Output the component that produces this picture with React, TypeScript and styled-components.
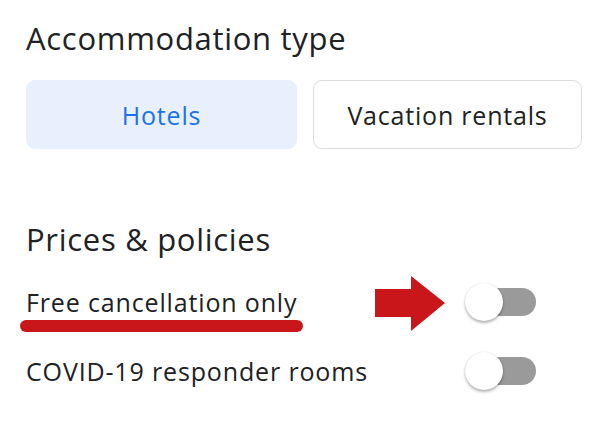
import styled, { createGlobalStyle } from "styled-components";

const GlobalStyle = createGlobalStyle`
  body {
    margin: 0;
    background: #ffffff;
    font-family: "Open Sans", "Liberation Sans", sans-serif;
    color: #202124;
  }
`;

const StyledPage = styled.div`
  width: 600px;
  height: 435px;
  box-sizing: border-box;
  padding: 18px 18px 0 26px;
  position: relative;
  overflow: hidden;
`;
const StyledHeading = styled.h2<{ top?: number }>`
  margin: ${props => props.top || 0}px 0 0 0;
  font-size: 31px;
  font-weight: 400;
  letter-spacing: 0.7px;
  line-height: 40px;
  color: #202124;
`;
const StyledChoiceRow = styled.div`
  display: grid;
  grid-template-columns: 271px 269px;
  gap: 16px;
  margin-top: 22px;
`;
const StyledChoice = styled.div<{ selected?: boolean }>`
  height: 69px;
  box-sizing: border-box;
  border-radius: 9px;
  display: flex;
  align-items: center;
  justify-content: center;
  font-size: 25px;
  letter-spacing: 0.8px;
  color: ${props => props.selected ? '#1a73e8' : '#202124'};
  background-color: ${props => props.selected ? '#e8f0fe' : 'white'};
  border: 1px solid ${props => props.selected ? '#e8f0fe' : '#dadce0'};
`;
const StyledOptions = styled.div`
  margin-top: 8px;
`;
const StyledOption = styled.div`
  height: 69px;
  display: flex;
  align-items: center;
  justify-content: space-between;
  padding-right: 46px;
`;
const StyledLabel = styled.span<{ marked?: boolean }>`
  position: relative;
  font-size: 25px;
  letter-spacing: 0.85px;
  color: #202124;
  &::after {
    content: '';
    display: ${props => props.marked ? 'block' : 'none'};
    position: absolute;
    left: -6px;
    right: -6px;
    bottom: -13px;
    height: 12px;
    border-radius: 6px;
    background: #c8161a;
  }
`;
const StyledSwitch = styled.div`
  position: relative;
  width: 70px;
  height: 28px;
  border-radius: 14px;
  background: #9a9a9a;
`;
const StyledThumb = styled.div`
  position: absolute;
  left: -1px;
  top: -5px;
  width: 38px;
  height: 38px;
  border-radius: 50%;
  background: #ffffff;
  box-shadow: 0 2px 3px rgba(0, 0, 0, 0.3), 0 0 1px rgba(0, 0, 0, 0.15);
`;
const StyledArrow = styled.svg`
  position: absolute;
  left: 375px;
  top: 276px;
`;

function Switch() {
  return (
    <StyledSwitch>
      <StyledThumb />
    </StyledSwitch>
  );
}

function App() {
  return (
    <StyledPage>
      <GlobalStyle />
      <StyledHeading>Accommodation type</StyledHeading>
      <StyledChoiceRow>
        <StyledChoice selected>Hotels</StyledChoice>
        <StyledChoice>Vacation rentals</StyledChoice>
      </StyledChoiceRow>
      <StyledHeading top={70}>Prices &amp; policies</StyledHeading>
      <StyledOptions>
        <StyledOption>
          <StyledLabel marked>Free cancellation only</StyledLabel>
          <Switch />
        </StyledOption>
        <StyledOption>
          <StyledLabel>COVID-19 responder rooms</StyledLabel>
          <Switch />
        </StyledOption>
      </StyledOptions>
      <StyledArrow width="71" height="56" viewBox="0 0 71 56">
        <path d="M0 13 H36 V0 L70 27 L36 55 V41 H0 Z" fill="#c8161a" />
      </StyledArrow>
    </StyledPage>
  );
}

export default App;
